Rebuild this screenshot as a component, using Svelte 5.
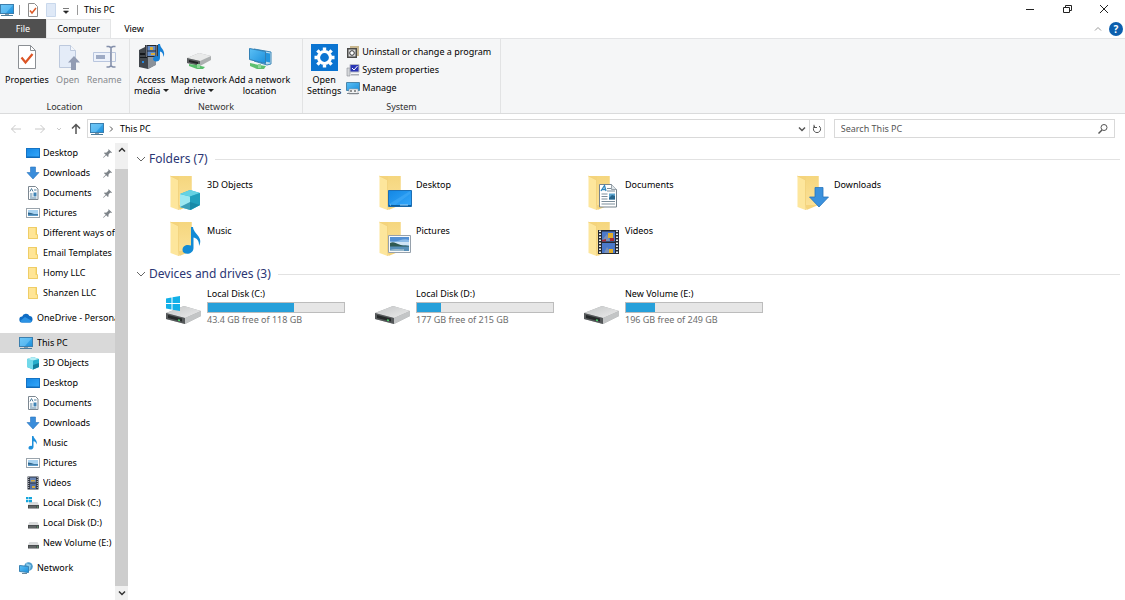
<script lang="ts">
    const quickAccess = [
        { name: 'Desktop', icon: 'desktop', pinned: true },
        { name: 'Downloads', icon: 'download', pinned: true },
        { name: 'Documents', icon: 'document', pinned: true },
        { name: 'Pictures', icon: 'picture', pinned: true },
        { name: 'Different ways of', icon: 'folder' },
        { name: 'Email Templates', icon: 'folder' },
        { name: 'Homy LLC', icon: 'folder' },
        { name: 'Shanzen LLC', icon: 'folder' }
    ];

    const thisPc = [
        { name: '3D Objects', icon: 'cube' },
        { name: 'Desktop', icon: 'desktop' },
        { name: 'Documents', icon: 'document' },
        { name: 'Downloads', icon: 'download' },
        { name: 'Music', icon: 'music' },
        { name: 'Pictures', icon: 'picture' },
        { name: 'Videos', icon: 'video' },
        { name: 'Local Disk (C:)', icon: 'windisk' },
        { name: 'Local Disk (D:)', icon: 'disk' },
        { name: 'New Volume (E:)', icon: 'disk' }
    ];

    const folders = ['3D Objects', 'Desktop', 'Documents', 'Downloads', 'Music', 'Pictures', 'Videos'];

    const drives = [
        { name: 'Local Disk (C:)', free: 43.4, total: 118, windows: true },
        { name: 'Local Disk (D:)', free: 177, total: 215 },
        { name: 'New Volume (E:)', free: 196, total: 249 }
    ];

    let search = $state('');
    let selected = $state('This PC');
    let foldersOpen = $state(true);
    let drivesOpen = $state(true);
</script>

{#snippet monitor()}
    <svg class="i14" viewBox="0 0 14 14">
        <rect x="0.5" y="1.5" width="13" height="9" fill="url(#screen)" stroke="#3c7fae" />
        <path d="M1 2h12L6 10H1z" fill="#7fd0fb" opacity=".5" />
        <path d="M5 11h4v1H5z" fill="#8a9aa5" />
        <path d="M1 12h12v1H1z" fill="#4d7d9c" />
    </svg>
{/snippet}

{#snippet small(icon: string)}
    <svg class="i14" viewBox="0 0 14 14" aria-hidden="true">
        {#if icon === 'desktop'}
            <rect x="0.5" y="2.5" width="13" height="9" fill="url(#desk)" stroke="#1573c4" />
            <path d="M1 11h12" stroke="#0a5aa5" stroke-width=".8" />
        {:else if icon === 'download'}
            <path d="M4.5 1h5v5.500H13L7 13 1 6.500h3.500z" fill="#3a8ddb" stroke="#2874bd" stroke-width=".6" />
        {:else if icon === 'document'}
            <path d="M2.500.5h7l2.500 2.500v10.500H2.500z" fill="#fff" stroke="#7c8791" />
            <path d="M4 5.500 5.500 2.500 7 5.500M8 4h2.500M4 8h2.500M4 10h2.500M4 12h6.500" fill="none" stroke="#53809f" />
            <path d="M7.500 6.500h3v4h-3z" fill="#3f83b5" />
        {:else if icon === 'picture'}
            <rect x="0.5" y="2.5" width="13" height="9" fill="#fff" stroke="#9aa4ac" />
            <path d="M2 4h10v6H2z" fill="#a9d3f1" />
            <path d="M2 6.500l3 .5 3 1h4v2H2z" fill="#2f6387" />
            <path d="M2 8.500h10V10H2z" fill="#5b9bc9" />
        {:else if icon === 'folder'}
            <path d="M2 1h9v12H2z" fill="#fbdc7a" />
            <path d="M9 9h3v4H3l-1-1V1h7z" fill="#ffe596" />
            <path d="M2.500 1.500h8v7h1v4h-9z" fill="none" stroke="#eac65c" stroke-width=".8" />
        {:else if icon === 'cube'}
            <path d="M1 3l6-2 6 2v8l-6 2.500L1 11z" fill="#28aecb" />
            <path d="M1 3l6 1.500v9L1 11z" fill="#72d9ea" />
            <path d="M1 3l6-2 6 2-6 1.500z" fill="#b4eff6" />
            <path d="M7 9l6-2v4l-6 2.500z" fill="#137f9d" />
        {:else if icon === 'music'}
            <path d="M6 0h1.500c.3 3 4.500 4 3 8.500-.2-2-1.300-3-3-3.200V11c0 3-5 3.500-5 1 0-1.800 2-2.600 3.500-2z" fill="#1e8fdb" />
        {:else if icon === 'video'}
            <path d="M1.500.5h11v13h-11z" fill="#2f3440" />
            <path d="M4 1.500h6v5H4z" fill="#6a86b5" />
            <path d="M4 7.500h6V13H4z" fill="#526ea3" />
            <path d="M5 4h4v1.500H5zM6 10h3v2H6z" fill="#d1a83f" />
            <path d="M2.700 1v12M11.300 1v12" stroke="#c8ccd3" stroke-dasharray="1 1" />
        {:else}
            <path d="M3.500 6h8l1.500 3H2z" fill="#d9dbdc" />
            <path d="M2 9h11v3.500H2z" fill="#4a4d4f" />
            <path d="M3 11h7" stroke="#8b8f91" stroke-width=".7" />
            <path d="M11 10.500h1v1h-1z" fill="#69c67a" />
            {#if icon === 'windisk'}
                <path d="M0 1h2.500v2.300H0zM3 1h3v2.300H3zM0 4h2.500v2.300H0zM3 4h3v2.300H3z" fill="#13a5dc" />
            {/if}
        {/if}
    </svg>
{/snippet}

{#snippet folderIcon(name: string)}
    <svg class="tile-icon" viewBox="-1 -1 36 38" aria-hidden="true">
        <path d="M4.500 0h21v29l-12 5z" fill="#f5d47c" />
        <path d="M13 0h12.500v29H13z" fill="url(#fold)" />
        <path d="M4.500 0l8 4v30l-8-3z" fill="#fde69c" />
        <path d="M4.500 0l8 4v30" fill="none" stroke="#f0d07a" stroke-width=".7" />
        {#if name === '3D Objects'}
            <path d="M14 18l10-4 10 3v12l-9 5-11-3z" fill="#2bb5cf" />
            <path d="M14 18l10 2.500V34l-10-3z" fill="#9ce8f1" />
            <path d="M14 18l10-4 10 3-10 3.500z" fill="#64d2e3" />
            <path d="M24 20.500L34 17v12l-10 5z" fill="#20a0bd" />
            <path d="M14 31l10-5 10 3-10 5z" fill="#14809f" opacity=".7" />
        {:else if name === 'Desktop'}
            <path d="M13.500 14.500h23v16h-23z" fill="url(#desk)" stroke="#1d6fb5" />
            <path d="M14 29h22v1.500H14z" fill="#0e5e9d" />
            <path d="M15 29h1m9 0h8" stroke="#9bd0f7" />
            <path d="M14 28L35 15v3L20 29z" fill="#6cc4ff" opacity=".25" />
        {:else if name === 'Documents'}
            <path d="M15.500 8.500h12l5 5v17.500h-17z" fill="#fff" stroke="#76838d" />
            <path d="M27.500 8.500v5h5" fill="#dfe6ea" stroke="#76838d" stroke-width=".7" />
            <path d="M17 15l3.500-5.500 1.500 5.500M18 13.500h4" fill="none" stroke="#2f86bd" stroke-width="1.300" />
            <path d="M23 12.500h4M23 15h8M17.500 18h6M17.500 20.500h6M17.500 23h6M17.500 25.500h13.500M17.500 28h13.500" stroke="#7b8d9a" />
            <path d="M25 17.500h6v6h-6z" fill="#5ca5cf" />
            <path d="M25 22l3-3 3 1v3.500h-6z" fill="#27658b" />
        {:else if name === 'Downloads'}
            <path d="M22 11.500h8V21h5.500l-9.500 10-9.500-10H22z" fill="#3b91dd" stroke="#2675bd" stroke-width=".8" />
        {:else if name === 'Music'}
            <path d="M25 5h2c.5 7 11 10 6 19 .5-6-3-8-5.500-8.500V26c0 7-11 7.500-11 2 0-4.500 4.500-6 8.500-4.500z" fill="#138bd5" />
        {:else if name === 'Pictures'}
            <path d="M13.500 13.500h22v17h-22z" fill="#f8fafb" stroke="#96a1ac" />
            <path d="M15 15h19v14H15z" fill="#8bbbe8" />
            <path d="M15 15h19v3c-6-3-12 3-19 1z" fill="#5490d3" />
            <path d="M15 20h19v3H15z" fill="#cfe4f5" />
            <path d="M15 21c3-2 6 0 8 1 4 2 6 1 11 2v1H15z" fill="#2f5951" />
            <path d="M15 24.500h19V29H15z" fill="#568fb8" />
            <path d="M15 28c5-2 10 0 14-1v2H15z" fill="#9ab9cc" />
        {:else if name === 'Videos'}
            <path d="M14 8h21v24H14z" fill="#252a33" />
            <path d="M18 9.500h13v10H18zM18 21h13v10H18z" fill="#4b79ca" />
            <path d="M19 17l4-5 3 7h-7zM20 31l3-6 4 6z" fill="#7a91b8" />
            <path d="M24 11h5v5h-5zM25 27h4v4h-4z" fill="#e2ae2a" />
            <path d="M18 18l4-1v2.500h-4zM26 16h4v3h-4z" fill="#a72c36" />
            <path d="M16 8.500v23M33 8.500v23" stroke="#e8eaec" stroke-width="2" stroke-dasharray="1.500 1.500" />
        {/if}
    </svg>
{/snippet}

{#snippet driveIcon(windows: boolean)}
    <svg class="tile-icon" viewBox="-1 -2 36 38" aria-hidden="true">
        <path d="M0 23l18-7 17 5v5l-16 8L0 29z" fill="#a9abac" />
        <path d="M0 23l18-7 17 5-16 7z" fill="url(#metal)" />
        <path d="M19 28l16-7v5l-16 8z" fill="#c3c5c6" />
        <path d="M0 23l19 5v6L0 29z" fill="#55585a" />
        <path d="M2 25l14 3.500v3L2 28z" fill="#26292a" />
        <path d="M12 30l2 .5" stroke="#4ed36c" stroke-width="1.500" />
        {#if windows}
            <path d="M0 8.500l5.500-1V13H0zM6.500 7.300L14 6v7H6.500zM0 14h5.500v5.500l-5.500-1zM6.500 14H14v7l-7.500-1.300z" fill="#12b0e8" />
        {/if}
    </svg>
{/snippet}

{#snippet treeLink(item: { name: string; icon: string; pinned?: boolean })}
    <a href="#top" class="row child">
        {@render small(item.icon)}
        <span>{item.name}</span>
        {#if item.pinned}
            <svg class="pin" viewBox="0 0 10 10" aria-hidden="true">
                <path d="M6 0l4 4-1 .5L8 4 6 6.500 6.200 8 5.500 9 3.500 7 1 9.500 0 10l.5-1L3 6.500 1 4.500 2 4l1.500.2L6 2z" fill="#7d8389" />
            </svg>
        {/if}
    </a>
{/snippet}

<svg class="defs" aria-hidden="true">
    <defs>
        <linearGradient id="screen" x1="0" y1="0" x2="1" y2="1">
            <stop offset="0" stop-color="#5cc0f5" /><stop offset="1" stop-color="#1b8fdc" />
        </linearGradient>
        <linearGradient id="desk" x1="0" y1="0" x2="1" y2="1">
            <stop offset="0" stop-color="#1387e4" /><stop offset="1" stop-color="#35a8fb" />
        </linearGradient>
        <linearGradient id="fold" x1="0" y1="0" x2="0" y2="1">
            <stop offset="0" stop-color="#f5d67e" /><stop offset="1" stop-color="#fbe197" />
        </linearGradient>
        <linearGradient id="metal" x1="0" y1="0" x2="1" y2="1">
            <stop offset="0" stop-color="#c4c6c7" /><stop offset="1" stop-color="#ececec" />
        </linearGradient>
    </defs>
</svg>

<div class="window" id="top">
    <header class="titlebar">
        {@render monitor()}
        <span class="sep"></span>
        <button aria-label="Properties">
            <svg class="i14" viewBox="0 0 14 14">
                <path d="M2.500.5h6l3 3v10h-9z" fill="#fff" stroke="#8d8d8d" />
                <path d="M4 7.500l2 2.500 4-5" fill="none" stroke="#dc5a28" stroke-width="1.500" />
            </svg>
        </button>
        <button aria-label="New folder">
            <svg class="i14" viewBox="0 0 14 14">
                <path d="M2.500.5h9v13h-9z" fill="#dfe9f7" stroke="#c9d8ec" />
            </svg>
        </button>
        <button class="customize" aria-label="Customize toolbar">
            <svg viewBox="0 0 6 6"><path d="M0 .5h6M.500 3h5L3 5.500z" fill="#222" stroke="#222" stroke-width=".6" /></svg>
        </button>
        <span class="sep"></span>
        <h1>This PC</h1>
        <div class="controls">
            <button aria-label="Minimize"><svg viewBox="0 0 10 10"><path d="M1 5.500h8" /></svg></button>
            <button aria-label="Restore">
                <svg viewBox="0 0 10 10"><path d="M1.500 3.500h6v5h-6zM3.500 3V1.500h6v5H8" /></svg>
            </button>
            <button aria-label="Close"><svg viewBox="0 0 10 10"><path d="M1 1l8 8M9 1L1 9" /></svg></button>
        </div>
    </header>

    <nav class="tabs">
        <button class="file">File</button>
        <button class="active">Computer</button>
        <button>View</button>
        <div class="tab-tools">
            <button class="collapse" aria-label="Collapse ribbon">
                <svg viewBox="0 0 8 8"><path d="M1 5.500l3-3 3 3" fill="none" stroke="#999" /></svg>
            </button>
            <button class="help" aria-label="Help">?</button>
        </div>
    </nav>

    <section class="ribbon">
        <div class="group location">
            <div class="tools">
                <button class="big">
                    <svg viewBox="0 0 28 28">
                        <path d="M5.500 2.500h12l5 5v18h-17z" fill="#fff" stroke="#8b8f94" />
                        <path d="M17.500 2.500v5h5" fill="none" stroke="#8b8f94" />
                        <path d="M8.500 14.500l4 5 7-8.500" fill="none" stroke="#dc5425" stroke-width="2.200" />
                    </svg>
                    <span>Properties</span>
                </button>
                <button class="big" disabled>
                    <svg viewBox="0 0 28 28">
                        <path d="M5.500 2.500h11l5 5v17h-16z" fill="#e4ecf8" stroke="#bdc9dd" />
                        <path d="M16.500 2.500v5h5" fill="#f4f7fc" stroke="#bdc9dd" />
                        <path d="M20 13l6 6.500h-4V27h-5v-7.500h-3z" fill="#929cb3" />
                    </svg>
                    <span>Open</span>
                </button>
                <button class="big" disabled>
                    <svg viewBox="0 0 28 28">
                        <path d="M3.500 9.500h17v9h-17z" fill="#edf2fb" stroke="#b9c6de" />
                        <path d="M22 9.500h3.500v9H22" fill="none" stroke="#b9c6de" />
                        <path d="M6 12h9v4H6z" fill="#9eabc5" />
                        <path d="M16.500 3.500h2.500l2 1 2-1h2.500M21 4v19M16.500 24h2.500l2-1 2 1h2.500" fill="none" stroke="#8490ab" stroke-width="1.600" />
                    </svg>
                    <span>Rename</span>
                </button>
            </div>
            <div class="caption">Location</div>
        </div>

        <div class="group network">
            <div class="tools">
                <button class="big">
                    <svg viewBox="0 0 28 28">
                        <path d="M2 7l6-3h10v18l-7 4-9-2z" fill="#41464c" />
                        <path d="M11 9l8-3v16l-8 4z" fill="#8a9199" />
                        <path d="M3 10h7v2H3zM3 14h7v1H3z" fill="#15181c" />
                        <path d="M5 18h2v2H5z" fill="#2788dd" />
                        <path d="M8 2h13v12H8z" fill="#22262e" />
                        <path d="M10.500 3h8v4.500h-8zM10.500 8.500h8V13h-8z" fill="#638cc9" />
                        <path d="M13 4h3v3h-3zM14 10h4v2h-4z" fill="#d9ac3c" />
                        <path d="M9.300 2.500v11M19.700 2.500v11" stroke="#ddd" stroke-dasharray="1 1" />
                        <path d="M21 1h2c.5 5 6 6 3.500 13-.3-4-1.500-5-3.500-5.500V15c0 4.500-7 4.500-7 1 0-2.500 3-3.500 5-2.500z" fill="#1780d6" />
                    </svg>
                    <span>Access<br />media <i class="caret"></i></span>
                </button>
                <button class="big">
                    <svg viewBox="0 0 28 28">
                        <path d="M2 15l12-5 12 3v4l-11 6L2 20z" fill="#adb0b1" />
                        <path d="M2 15l12-5 12 3-11 5z" fill="#e9eaea" />
                        <path d="M2 15l13 3v5L2 20z" fill="#5b5e60" />
                        <path d="M4 17l9 2v2l-9-2z" fill="#1f2223" />
                        <path d="M4 21l8 1 8 2-2 2h-6l-8-3z" fill="#57bd6a" />
                        <path d="M12 21h3v4h-3z" fill="#8ed69a" />
                    </svg>
                    <span>Map network<br />drive <i class="caret"></i></span>
                </button>
                <button class="big">
                    <svg viewBox="0 0 28 28">
                        <path d="M8 6l17 3v12l-4 1L8 18z" fill="#b9dbf0" stroke="#3d87b8" />
                        <path d="M10 8l14 2.500v9l-14-3z" fill="#2495dd" />
                        <path d="M3.500 5.500l16 3v12l-16-4z" fill="url(#screen)" stroke="#3380b5" />
                        <path d="M4 20l9 2 7 1-2 3h-7l-7-3z" fill="#5dc070" />
                        <path d="M12 21h3v4h-3z" fill="#8ed69a" />
                    </svg>
                    <span>Add a network<br />location</span>
                </button>
            </div>
            <div class="caption">Network</div>
        </div>

        <div class="group system">
            <div class="tools">
                <button class="big">
                    <svg viewBox="0 0 28 28">
                        <path d="M1 1h27v27H1z" fill="#0b74d1" />
                        <circle cx="14.500" cy="14.500" r="6" fill="none" stroke="#fff" stroke-width="3.200" />
                        <path d="M14.500 4.500v3M14.500 21.500v3M4.500 14.500h3M21.500 14.500h3M7.400 7.400l2.200 2.200M19.400 19.400l2.200 2.200M7.400 21.600l2.200-2.200M19.400 9.600l2.200-2.200" stroke="#fff" stroke-width="3.400" />
                    </svg>
                    <span>Open<br />Settings</span>
                </button>
                <div class="list">
                    <button>
                        <svg class="i14" viewBox="0 0 14 14">
                            <path d="M4 1h9v10H4z" fill="#c9b78e" />
                            <path d="M1 3h10v10H1z" fill="#4a4a48" />
                            <path d="M2.500 4.500h7v7h-7z" fill="#ddd" />
                            <circle cx="6" cy="8" r="2.300" fill="#fff" stroke="#333" />
                        </svg>
                        Uninstall or change a program
                    </button>
                    <button>
                        <svg class="i14" viewBox="0 0 14 14">
                            <path d="M1 5h3v8H1z" fill="#d5d7da" stroke="#8a8e94" stroke-width=".6" />
                            <path d="M4 1.500h9v7.500H4z" fill="#2a36b4" stroke="#b6b9c4" />
                            <path d="M6 5l2 2 3.500-4" fill="none" stroke="#fff" />
                            <path d="M5 11h8v1.500H5z" fill="#a9adb5" />
                        </svg>
                        System properties
                    </button>
                    <button>
                        <svg class="i14" viewBox="0 0 14 14">
                            <path d="M.5 1.500h13v8H.5z" fill="url(#screen)" stroke="#4a86ab" />
                            <path d="M3 8h9v5H3z" fill="#f0f1f2" stroke="#9a9fa5" stroke-width=".6" />
                            <path d="M5 9v2M9 9v2" stroke="#333" />
                            <path d="M1 12.500h12" stroke="#7f868c" />
                        </svg>
                        Manage
                    </button>
                </div>
            </div>
            <div class="caption">System</div>
        </div>
    </section>

    <div class="addressbar">
        <div class="history">
            <button aria-label="Back" disabled>
                <svg class="i12" viewBox="0 0 12 12"><path d="M11 6H1.500M5.500 2l-4 4 4 4" /></svg>
            </button>
            <button aria-label="Forward" disabled>
                <svg class="i12" viewBox="0 0 12 12"><path d="M1 6h9.500M6.500 2l4 4-4 4" /></svg>
            </button>
            <button aria-label="Recent locations" class="recent" disabled>
                <svg class="i12" viewBox="0 0 12 12"><path d="M4 5l2 2 2-2" /></svg>
            </button>
            <button aria-label="Up">
                <svg class="i12" viewBox="0 0 12 12"><path d="M6 11V1.500M2 5.500l4-4 4 4" stroke-width="1.500" /></svg>
            </button>
        </div>
        <div class="path">
            {@render monitor()}
            <svg class="crumb" viewBox="0 0 6 8"><path d="M2 1.500L4.500 4 2 6.500" /></svg>
            <button class="current">This PC</button>
            <button class="drop" aria-label="Previous locations">
                <svg viewBox="0 0 8 8"><path d="M1 2.500l3 3 3-3" /></svg>
            </button>
            <button class="refresh" aria-label="Refresh">
                <svg viewBox="0 0 10 10"><path d="M3 2a3.600 3.600 0 1 0 4 0M2 .8v2.700h3" /></svg>
            </button>
        </div>
        <label class="search">
            <input type="text" aria-label="Search This PC" placeholder="Search This PC" bind:value={search} />
            <svg class="i12" viewBox="0 0 12 12"><path d="M1.500 10.500L5 7" stroke-width="1.500" /><circle cx="7" cy="4.500" r="3" /></svg>
        </label>
    </div>

    <div class="body">
        <aside>
            <nav class="tree">
                <div>
                    {#each quickAccess as item}
                        {@render treeLink(item)}
                    {/each}
                </div>
                <a href="#top" class="row">
                    <svg class="i14" viewBox="0 0 14 14" aria-hidden="true">
                        <path d="M3.500 11.500a3 3 0 0 1-.3-6A4 4 0 0 1 10.500 5a3.300 3.300 0 0 1 .5 6.500z" fill="#0f6cc4" />
                        <path d="M1 10l5-4 7 4-1 1.500H3z" fill="#2b92e4" />
                    </svg>
                    <span>OneDrive - Personal</span>
                </a>
                <div>
                    <a href="#top" class="row" class:selected={selected === 'This PC'}>
                        {@render monitor()}
                        <span>This PC</span>
                    </a>
                    {#each thisPc as item}
                        {@render treeLink(item)}
                    {/each}
                </div>
                <a href="#top" class="row">
                    <svg class="i14" viewBox="0 0 14 14" aria-hidden="true">
                        <circle cx="9.500" cy="5.500" r="4.300" fill="#4a9bcd" />
                        <path d="M7 2l5 2-1 5-3-1z" fill="#8ecbe9" />
                        <path d="M.5 4.500l9 1v6l-9-1z" fill="url(#screen)" stroke="#3984b5" />
                        <path d="M3 12.500h5" stroke="#69889c" />
                    </svg>
                    <span>Network</span>
                </a>
            </nav>
            <div class="scrollbar">
                <button aria-label="Scroll up"><svg viewBox="0 0 8 8"><path d="M1 5.500l3-3 3 3" /></svg></button>
                <div class="thumb"></div>
                <button aria-label="Scroll down"><svg viewBox="0 0 8 8"><path d="M1 2.500l3 3 3-3" /></svg></button>
            </div>
        </aside>

        <main>
            <button class="heading" onclick={() => (foldersOpen = !foldersOpen)}>
                <svg viewBox="0 0 10 10"><path d="M1 3l4 4 4-4" /></svg>
                <span>Folders (7)</span>
            </button>
            {#if foldersOpen}
                <div class="tiles folders">
                    {#each folders as name}
                        <a href="#top" class="tile">
                            {@render folderIcon(name)}
                            <span>{name}</span>
                        </a>
                    {/each}
                </div>
            {/if}

            <button class="heading" onclick={() => (drivesOpen = !drivesOpen)}>
                <svg viewBox="0 0 10 10"><path d="M1 3l4 4 4-4" /></svg>
                <span>Devices and drives (3)</span>
            </button>
            {#if drivesOpen}
                <div class="tiles drives">
                    {#each drives as drive}
                        <a href="#top" class="tile">
                            {@render driveIcon(!!drive.windows)}
                            <div class="info">
                                <span>{drive.name}</span>
                                <div class="bar">
                                    <div class="used" style="width: {(1 - drive.free / drive.total) * 100}%"></div>
                                </div>
                                <span class="free">{drive.free} GB free of {drive.total} GB</span>
                            </div>
                        </a>
                    {/each}
                </div>
            {/if}
        </main>
    </div>
</div>

<style>
    :global(body) {
        background: #fff;
        overflow: hidden;
    }

    .window {
        display: flex;
        flex-direction: column;
        height: 100vh;
        font: 9px/12px "Segoe UI", "Noto Sans", "Open Sans", sans-serif;
        color: #000;
    }

    .window * {
        box-sizing: border-box;
    }

    .defs {
        position: absolute;
        width: 0;
        height: 0;
    }

    button {
        padding: 0;
        border: 0;
        background: none;
        font: inherit;
        color: inherit;
    }

    a {
        color: inherit;
        text-decoration: none;
    }

    svg {
        display: block;
        flex: none;
    }

    .i14 {
        width: 14px;
        height: 14px;
    }

    .i12 {
        width: 12px;
        height: 12px;
    }

    /* title bar */
    .titlebar {
        display: flex;
        align-items: center;
        height: 19px;
        flex: none;
    }

    .titlebar .sep {
        width: 1px;
        height: 10px;
        margin: 0 6px 0 5px;
        background: #999;
    }

    .titlebar > button {
        margin-right: 4px;
    }

    .titlebar > .customize {
        padding: 2px 1px 0;
        margin-right: 2px;
    }

    .customize svg {
        width: 6px;
        height: 6px;
    }

    h1 {
        margin: 0;
        font: inherit;
    }

    .controls {
        display: flex;
        margin-left: auto;
        padding-right: 3px;
    }

    .controls button {
        display: grid;
        place-items: center;
        width: 37px;
        height: 19px;
        padding-bottom: 2px;
    }

    .controls svg {
        width: 10px;
        height: 10px;
        fill: none;
        stroke: #222;
    }

    /* tabs */
    .tabs {
        display: flex;
        height: 19px;
        flex: none;
    }

    .tabs > button {
        width: 46px;
    }

    .tabs .file {
        background: #505050;
        color: #fff;
    }

    .tabs .active {
        width: 65px;
        border: 1px solid #e4e5e6;
        border-bottom: 0;
        background: #f5f6f7;
    }

    .tab-tools {
        display: flex;
        align-items: center;
        gap: 7px;
        margin-left: auto;
        padding-right: 2px;
    }

    .collapse svg {
        width: 8px;
        height: 8px;
    }

    .help {
        width: 14px;
        height: 14px;
        border-radius: 50%;
        background: #0c5fae;
        color: #fff;
        font-size: 10px;
        font-weight: bold;
    }

    /* ribbon */
    .ribbon {
        display: flex;
        height: 76px;
        flex: none;
        border-top: 1px solid #e3e4e6;
        border-bottom: 1px solid #dadbdc;
        background: #f5f6f7;
    }

    .group {
        display: flex;
        flex-direction: column;
        justify-content: space-between;
        padding: 4px 4px 0;
        border-right: 1px solid #e2e3e4;
    }

    .location {
        width: 130px;
    }

    .network {
        width: 173px;
    }

    .system {
        width: 198px;
    }

    .tools {
        display: flex;
        gap: 2px;
    }

    .location .tools {
        gap: 5px;
        padding-left: 1px;
    }

    .system .tools {
        gap: 5px;
    }

    .big {
        display: flex;
        flex-direction: column;
        align-items: center;
        line-height: 11px;
        white-space: nowrap;
    }

    .big svg {
        width: 28px;
        height: 28px;
        margin-bottom: 3px;
    }

    .big:disabled {
        color: #85888c;
    }

    .caret {
        display: inline-block;
        border: 3px solid transparent;
        border-top-color: #222;
        border-bottom: 0;
        vertical-align: 2px;
    }

    .caption {
        text-align: center;
        color: #333;
    }

    .list {
        display: flex;
        flex-direction: column;
    }

    .list button {
        display: flex;
        align-items: center;
        gap: 2px;
        height: 18px;
        white-space: nowrap;
    }

    /* address bar */
    .addressbar {
        display: flex;
        align-items: center;
        gap: 9px;
        height: 29px;
        flex: none;
        padding-right: 10px;
    }

    .addressbar svg {
        fill: none;
        stroke: #555;
    }

    .history {
        display: flex;
        gap: 12px;
        padding-left: 10px;
        margin-right: -4px;
    }

    .history .recent {
        margin: 0 -7px 0 -5px;
    }

    .history button:disabled svg {
        stroke: #c8c8c8;
    }

    .path {
        display: flex;
        align-items: center;
        flex: 1;
        height: 19px;
        border: 1px solid #d9d9d9;
        padding-left: 2px;
    }

    .path .i14 {
        stroke: none;
    }

    .crumb {
        width: 6px;
        height: 8px;
        margin: 0 6px 0 4px;
    }

    .path .current {
        flex: 1;
        text-align: left;
    }

    .drop svg {
        width: 8px;
        height: 8px;
        margin-right: 3px;
        stroke-width: 1.5px;
    }

    .refresh {
        height: 17px;
        padding: 0 2px;
        border-left: 1px solid #d9d9d9;
    }

    .refresh svg {
        width: 10px;
        height: 10px;
    }

    .search {
        display: flex;
        align-items: center;
        width: 25vw;
        height: 19px;
        border: 1px solid #d9d9d9;
        padding: 0 5px 0 6px;
    }

    .search input {
        flex: 1;
        min-width: 0;
        padding: 0;
        border: 0;
        outline: 0;
        font: inherit;
    }

    .search input::placeholder {
        color: #555;
        opacity: 1;
    }

    /* sidebar */
    .body {
        display: flex;
        flex: 1;
        min-height: 0;
    }

    aside {
        display: flex;
        width: 128px;
        flex: none;
    }

    .tree {
        display: flex;
        flex-direction: column;
        gap: 5px;
        flex: 1;
        min-width: 0;
        overflow: hidden;
    }

    .row {
        display: flex;
        align-items: center;
        gap: 4px;
        height: 20px;
        padding-left: 19px;
        white-space: nowrap;
    }

    .row span {
        flex: 1;
        overflow: hidden;
    }

    .child {
        padding-left: 26px;
        gap: 3px;
    }

    .selected {
        background: #d9d9d9;
    }

    .pin {
        width: 9px;
        height: 9px;
        margin-right: 3px;
    }

    .scrollbar {
        display: flex;
        flex-direction: column;
        width: 13px;
        background: #f0f0f0;
    }

    .scrollbar button {
        display: grid;
        place-items: center;
        height: 14px;
    }

    .scrollbar svg {
        width: 8px;
        height: 8px;
        fill: none;
        stroke: #333;
        stroke-width: 1.5px;
    }

    .thumb {
        flex: 1;
        margin-top: 12px;
        background: #cdcdcd;
    }

    /* content */
    main {
        flex: 1;
        min-width: 0;
        padding: 8px 5px 0 8px;
        overflow: hidden;
    }

    .heading {
        display: flex;
        align-items: center;
        gap: 3px;
        width: 100%;
        font-size: 12px;
        line-height: 16px;
        color: #2b3674;
    }

    .heading svg {
        width: 10px;
        height: 10px;
        fill: none;
        stroke: #666;
    }

    .heading::after {
        content: "";
        flex: 1;
        height: 1px;
        margin-left: 4px;
        background: #e2e2e2;
    }

    .tiles {
        display: grid;
        grid-template-columns: repeat(auto-fill, 209px);
        padding-left: 29px;
    }

    .folders {
        padding-top: 8px;
        margin-bottom: -1px;
    }

    .tile {
        display: flex;
        gap: 6px;
    }

    .folders .tile {
        height: 46px;
    }

    .folders .tile span {
        padding-top: 4px;
    }

    .drives {
        padding-top: 6px;
    }

    .tile-icon {
        width: 36px;
        height: 38px;
        overflow: visible;
    }

    .info {
        display: flex;
        flex-direction: column;
        width: 138px;
    }

    .bar {
        height: 11px;
        margin: 2px 0 1px;
        border: 1px solid #bcbcbc;
        background: #e6e6e6;
    }

    .used {
        height: 100%;
        background: #26a0da;
    }

    .free {
        color: #6d6d6d;
    }
</style>
